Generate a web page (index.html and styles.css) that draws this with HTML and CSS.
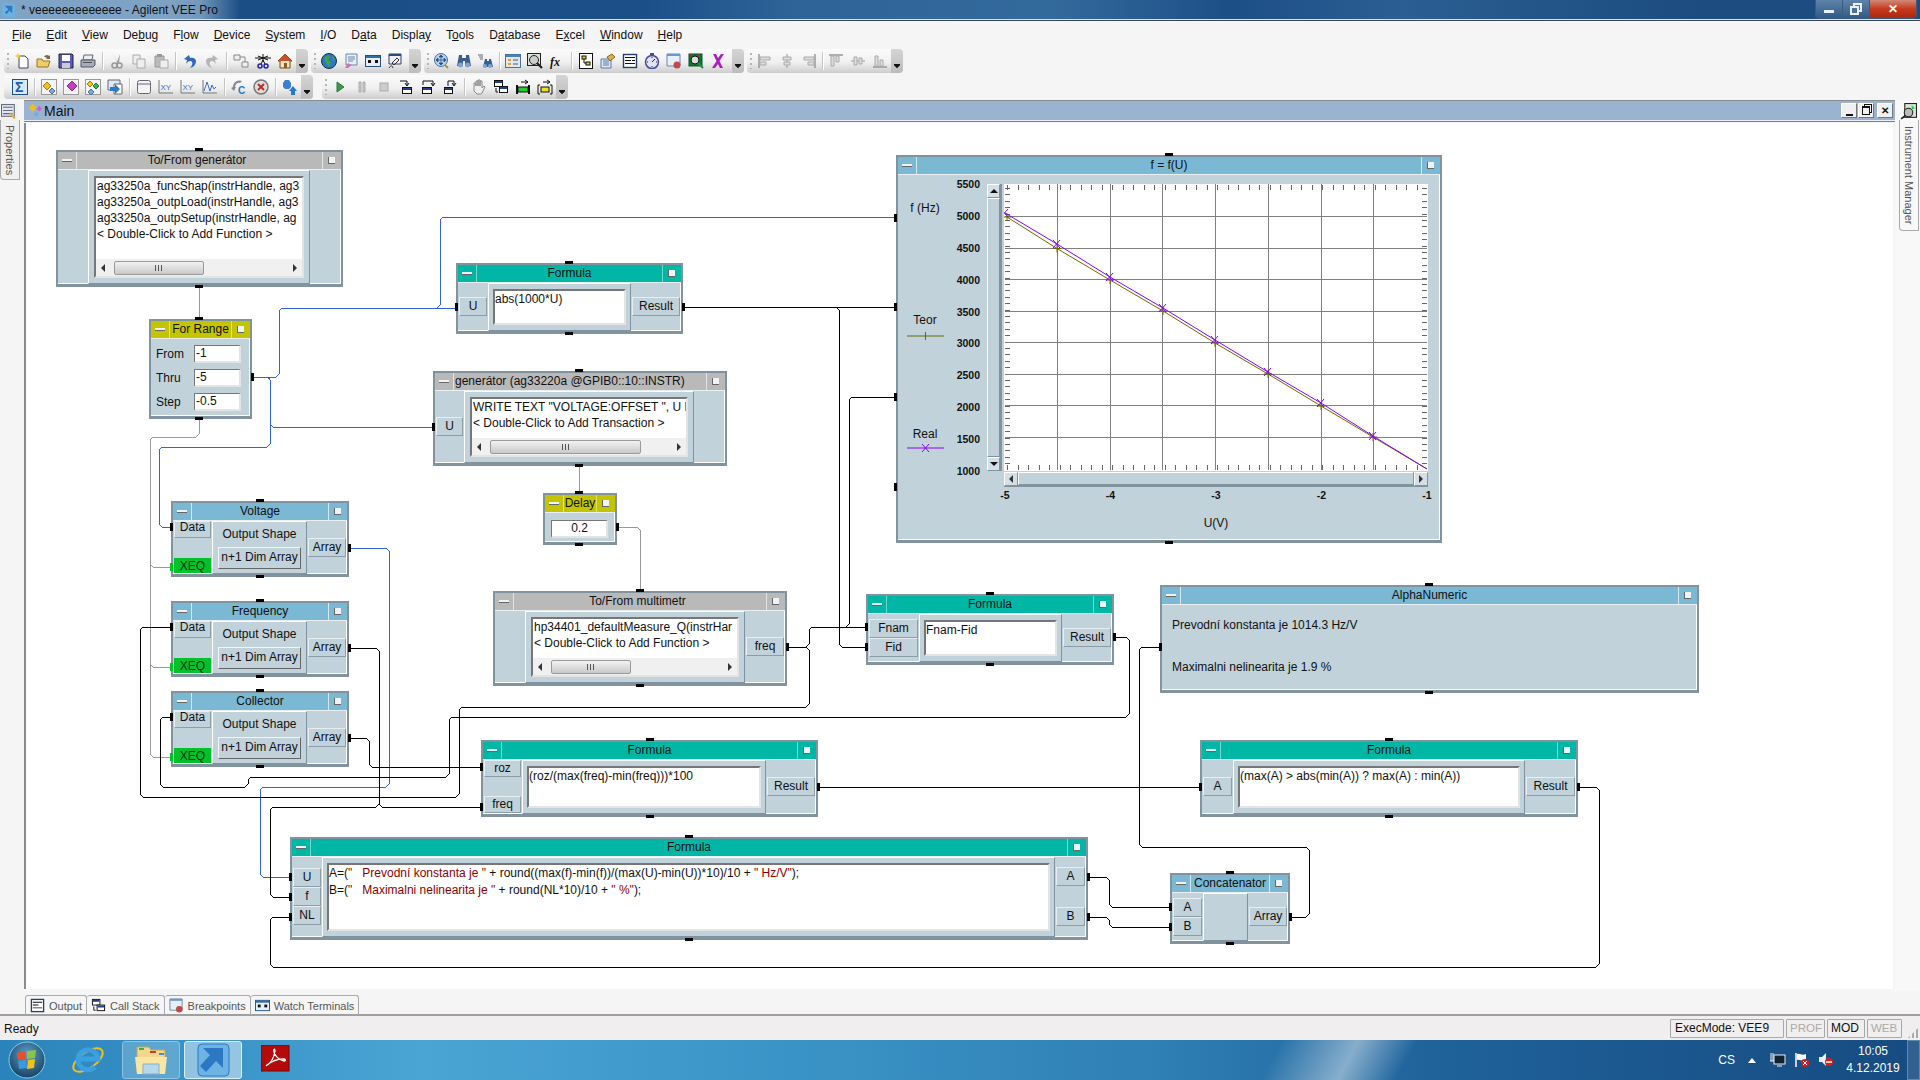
FILE: index.html
```html
<!DOCTYPE html>
<html>
<head>
    <title>veeeeeeeeeeeee - Agilent VEE Pro</title>
    <link rel="stylesheet" href="styles.css">
</head>
<body>
    <div class="titlebar">
        <svg class="app-icon" viewBox="0 0 16 16"><rect x="1" y="1" width="14" height="15" rx="2" fill="#6fb1de"/><path d="M4 4h8v8l-3-3-3 4-2-2 4-3z" fill="#2d78c4"/></svg>
        <span class="app-title">* veeeeeeeeeeeee - Agilent VEE Pro</span>
        <div class="win-btns">
            <span class="win-btn"><i class="w-min"></i></span>
            <span class="win-btn"><svg class="w-res" viewBox="0 0 12 12"><path d="M4 1h7v7H4z" fill="none" stroke="#e8eef4" stroke-width="2"/><path d="M1 4h7v7H1z" fill="#48719b" stroke="#e8eef4" stroke-width="2"/></svg></span>
            <span class="win-btn win-close">&#10005;</span>
        </div>
    </div>

    <div class="menubar">
        <span><u>F</u>ile</span><span><u>E</u>dit</span><span><u>V</u>iew</span><span>De<u>b</u>ug</span><span>F<u>l</u>ow</span><span><u>D</u>evice</span><span><u>S</u>ystem</span><span><u>I</u>/O</span><span>D<u>a</u>ta</span><span>Displa<u>y</u></span><span>T<u>o</u>ols</span><span>D<u>a</u>tabase</span><span>E<u>x</u>cel</span><span><u>W</u>indow</span><span><u>H</u>elp</span>
    </div>

    <div class="toolbars">
        <div class="tbrow">
            <div class="bar">
                <i class="grip"></i>
                <svg class="ic" viewBox="0 0 16 16"><path d="M5 3h6l3 3v9H5z" fill="#fff" stroke="#445"/><path d="M4 0l1 2 2 1-2 1-1 2-1-2-2-1 2-1z" fill="#fc3"/></svg>
                <svg class="ic" viewBox="0 0 16 16"><path d="M1 6h5l1 2h7l-2 6H1z" fill="#f0cc68" stroke="#9a7420"/><path d="M8 4c1-2 3-3 5-1l1-1v4h-4l1-1c-1-1-2-1-3-1z" fill="#7a6a40"/></svg>
                <svg class="ic" viewBox="0 0 16 16"><path d="M1 1h13l1 1v13H1z" fill="#5b5bb5" stroke="#223"/><rect x="4" y="2" width="8" height="6" fill="#fff"/><rect x="4" y="10" width="8" height="5" fill="#c9c9d8"/></svg>
                <svg class="ic" viewBox="0 0 16 16"><path d="M4 2h9l-1 5H3z" fill="#eee" stroke="#667"/><path d="M1 7h14v5l-2 2H1z" fill="#a7adb6" stroke="#556"/><rect x="3" y="9" width="9" height="1" fill="#555"/></svg>
                <i class="sep"></i>
                <svg class="ic" viewBox="0 0 16 16"><path d="M5 1l3 8 3-8-1 9-2 0z" fill="#9a9a9a"/><circle cx="5.5" cy="12.500" r="2.500" fill="none" stroke="#999" stroke-width="1.500"/><circle cx="10.500" cy="12.500" r="2.500" fill="none" stroke="#999" stroke-width="1.500"/></svg>
                <svg class="ic" viewBox="0 0 16 16"><path d="M2 2h7v9H2z" fill="#eee" stroke="#aaa"/><path d="M6 6h8v9H6z" fill="#eee" stroke="#aaa"/></svg>
                <svg class="ic" viewBox="0 0 16 16"><path d="M2 3h9v11H2z" fill="#bbb" stroke="#999"/><rect x="4" y="1" width="5" height="3" fill="#999"/><path d="M7 7h8v8H7z" fill="#eee" stroke="#aaa"/></svg>
                <i class="sep"></i>
                <svg class="ic" viewBox="0 0 16 16"><path d="M7 2L2 6l3 1-1 4c2-3 5-4 6-2 1 1 0 4-2 6 4-1 6-4 6-7 0-3-4-4-6-3z" fill="#2f6bb8"/></svg>
                <svg class="ic" viewBox="0 0 16 16"><path d="M9 2l5 4-3 1 1 4c-2-3-5-4-6-2-1 1 0 4 2 6-4-1-6-4-6-7 0-3 4-4 6-3z" fill="#b5b5b5"/></svg>
                <i class="sep"></i>
                <svg class="ic" viewBox="0 0 16 16"><path d="M1 2h6v5H1zM9 9h6v5H9z" fill="#eee" stroke="#888"/><path d="M7 4h5v5" fill="none" stroke="#888"/></svg>
                <svg class="ic" viewBox="0 0 16 16"><path d="M0 5h16M8 1v8M3 3l10 4M13 3L3 7" stroke="#111" fill="none"/><circle cx="5" cy="13" r="2" fill="none" stroke="#22a" stroke-width="1.500"/><circle cx="11" cy="13" r="2" fill="none" stroke="#22a" stroke-width="1.500"/><path d="M6 11l2-4 2 4" stroke="#111" fill="none"/></svg>
                <svg class="ic" viewBox="0 0 16 16"><path d="M8 1L1 8h2v7h10V8h2z" fill="#f3e3bc" stroke="#7a4a1a"/><path d="M8 1L1 8h14z" fill="#c8502a"/><rect x="7" y="10" width="3" height="5" fill="#8a5a20"/></svg>
                <i class="more"></i>
            </div>
            <div class="bar bar-wide">
                <i class="grip"></i>
                <svg class="ic" viewBox="0 0 16 16"><circle cx="8" cy="8" r="7.500" fill="#2b78c8" stroke="#134"/><path d="M3 5l4-3 2 2-2 3 3 2-2 5-3-4zM11 3l3 3-2 2z" fill="#3fa34a"/></svg>
                <svg class="ic" viewBox="0 0 16 16"><path d="M3 1h11v11H3z" fill="#e8eef6" stroke="#6a87b0"/><path d="M5 4h7M5 6h7M5 8h5" stroke="#6a87b0"/><path d="M2 15l3-5 4 2-4 3z" fill="#d070c0"/></svg>
                <svg class="ic" viewBox="0 0 16 16"><rect x="0.500" y="2.500" width="15" height="11" fill="#e8eef6" stroke="#24507f"/><rect x="1" y="3" width="14" height="2" fill="#2b6fb3"/><rect x="3" y="7" width="3" height="3" fill="#111"/><rect x="10" y="7" width="3" height="3" fill="#111"/></svg>
                <svg class="ic" viewBox="0 0 16 16"><path d="M2 1h12v10H2z" fill="#eef" stroke="#345"/><rect x="2" y="1" width="12" height="2" fill="#24507f"/><path d="M5 10l5-5 2 2-5 5zM2 15c2-3 3-3 4 0" fill="none" stroke="#333"/></svg>
                <i class="more"></i>
            </div>
            <div class="bar bar-wide">
                <i class="grip"></i>
                <svg class="ic" viewBox="0 0 16 16"><circle cx="7" cy="7" r="6.500" fill="#b8d0ec" stroke="#4a6fa0"/><path d="M7 2v10M2 7h10M7 2L5 4h4zM7 12l-2-2h4zM2 7l2-2v4zM12 7l-2-2v4z" fill="#24507f" stroke="#24507f" stroke-width=".7"/><path d="M11 12l3 3" stroke="#c08a30" stroke-width="2"/></svg>
                <svg class="ic" viewBox="0 0 16 16"><path d="M3 2h3v3h4V2h3l2 11H9V8H7v5H1z" fill="#3a5f8f"/><circle cx="4.500" cy="12" r="2.500" fill="#7fa4d2"/><circle cx="11.500" cy="12" r="2.500" fill="#7fa4d2"/></svg>
                <svg class="ic" viewBox="0 0 16 16"><path d="M7 6h2v2h2V6h2l2 8H5z" fill="#3a5f8f"/><circle cx="7" cy="13" r="2" fill="#7fa4d2"/><circle cx="12" cy="13" r="2" fill="#7fa4d2"/><path d="M0 2h5M1 4h4M2 6h3" stroke="#667"/></svg>
                <i class="sep sep-thin"></i>
                <svg class="ic" viewBox="0 0 16 16"><rect x="0.500" y="1.500" width="15" height="13" fill="#dfe8f5" stroke="#4a6fa0"/><rect x="1" y="2" width="14" height="2" fill="#4a7fc0"/><path d="M3 6h3v2H3zM3 10h3v2H3z" fill="#e0a030"/><path d="M8 7h5M8 11h5" stroke="#555"/></svg>
                <svg class="ic" viewBox="0 0 16 16"><rect x="0.500" y="0.500" width="13" height="12" fill="#d8e4d8" stroke="#222"/><circle cx="7" cy="7" r="4.500" fill="#ccc" stroke="#222"/><path d="M10 10l5 5" stroke="#222" stroke-width="2.200"/></svg>
                <svg class="ic" viewBox="0 0 16 16"><text x="1" y="13" class="ic-fx">fx</text></svg>
                <i class="sep"></i>
                <svg class="ic" viewBox="0 0 16 16"><rect x="1.500" y="0.500" width="13" height="15" fill="#fff" stroke="#111"/><rect x="4" y="3" width="4" height="3" fill="#e8cc20" stroke="#111"/><rect x="8" y="9" width="4" height="3" fill="#e8cc20" stroke="#111"/><path d="M6 6v4h2" fill="none" stroke="#111"/></svg>
                <svg class="ic" viewBox="0 0 16 16"><path d="M1 6h10v9H1z" fill="#dde6f2" stroke="#5a7aa5"/><path d="M3 8h6M3 10h6M3 12h6" stroke="#5a7aa5"/><path d="M7 4l5-3 3 3-5 4z" fill="#e0b040" stroke="#8a6a20"/></svg>
                <svg class="ic" viewBox="0 0 16 16"><rect x="1.500" y="1.500" width="13" height="13" fill="#fff" stroke="#24406a" stroke-width="1.400"/><path d="M3 4h10v1H3zM3 7h6v1H3zM3 10h10v1H3zM10 7h3v1h-3z" fill="#111"/></svg>
                <svg class="ic" viewBox="0 0 16 16"><circle cx="8" cy="9" r="6.500" fill="#dfe3f2" stroke="#4a4a9a" stroke-width="1.500"/><rect x="6" y="0" width="4" height="2" fill="#4a4a9a"/><path d="M8 9l3-3M8 4v1M8 13v1M3 9h1M12 9h1" stroke="#222"/></svg>
                <svg class="ic" viewBox="0 0 16 16"><path d="M1 1h13v12H1z" fill="#e8eef6" stroke="#6a87b0"/><rect x="1" y="1" width="13" height="2" fill="#6a97d0"/><circle cx="11" cy="12" r="3.500" fill="#c04a4a"/></svg>
                <svg class="ic" viewBox="0 0 16 16"><rect x="1" y="1" width="13" height="12" fill="#0a7a2a" stroke="#053"/><circle cx="7" cy="7" r="4" fill="#ddd" stroke="#111"/><path d="M10 10l5 5" stroke="#2a8a3a" stroke-width="2"/><path d="M3 1v3M11 1v3" stroke="#c22"/></svg>
                <svg class="ic" viewBox="0 0 16 16"><path d="M3 1h3l2 4 3-4h3L9.500 8l3.500 7h-3L8 11l-3 4H2l4.500-7z" fill="#b01ec0"/></svg>
                <i class="more"></i>
            </div>
            <div class="bar">
                <i class="grip"></i>
                <svg class="ic off" viewBox="0 0 16 16"><path d="M2 1v14" stroke="#999" stroke-width="1.500"/><path d="M3 4h10v3H3zM3 9h6v3H3z" fill="#ddd" stroke="#aaa"/></svg>
                <svg class="ic off" viewBox="0 0 16 16"><path d="M8 1v14" stroke="#999"/><path d="M4 4h8v3H4zM5 9h6v3H5z" fill="#ddd" stroke="#aaa"/></svg>
                <svg class="ic off" viewBox="0 0 16 16"><path d="M14 1v14" stroke="#999" stroke-width="1.500"/><path d="M3 4h10v3H3zM7 9h6v3H7z" fill="#ddd" stroke="#aaa"/></svg>
                <i class="sep sep-thin"></i>
                <svg class="ic off" viewBox="0 0 16 16"><path d="M1 2h14" stroke="#999" stroke-width="1.500"/><path d="M3 3h3v10H3zM8 3h3v6H8z" fill="#ddd" stroke="#aaa"/></svg>
                <svg class="ic off" viewBox="0 0 16 16"><path d="M1 8h14" stroke="#999"/><path d="M4 4h3v8H4zM9 5h3v6H9z" fill="#ddd" stroke="#aaa"/></svg>
                <svg class="ic off" viewBox="0 0 16 16"><path d="M1 14h14" stroke="#999" stroke-width="1.500"/><path d="M3 3h3v10H3zM8 7h3v6H8z" fill="#ddd" stroke="#aaa"/></svg>
                <i class="more"></i>
            </div>
        </div>
        <div class="tbrow">
            <div class="bar bar-nogrip">
                <svg class="ic" viewBox="0 0 16 16"><rect x="0.500" y="0.500" width="15" height="15" fill="#d8e8f8" stroke="#24507f"/><text x="3" y="13" class="ic-sig">&#931;</text></svg>
                <i class="sep"></i>
                <svg class="ic" viewBox="0 0 16 16"><rect x="0.500" y="0.500" width="15" height="15" fill="#f4f4f4" stroke="#999"/><path d="M6 3l4 4-4 4-4-4z" fill="#f0c020" stroke="#a08010"/><path d="M11 9l3 3-3 3-3-3z" fill="#7fa8e0" stroke="#4a6fa0"/></svg>
                <svg class="ic" viewBox="0 0 16 16"><rect x="0.500" y="0.500" width="15" height="15" fill="#f4f4f4" stroke="#999"/><path d="M9 2l5 5-5 5-5-5z" fill="#c040c0" stroke="#803080"/></svg>
                <svg class="ic" viewBox="0 0 16 16"><rect x="0.500" y="0.500" width="15" height="15" fill="#f4f4f4" stroke="#999"/><path d="M5 2l3 3-3 3-3-3z" fill="#f0c020" stroke="#a08010"/><path d="M11 4l3 3-3 3-3-3z" fill="#40b060" stroke="#207040"/><path d="M6 10l3 3-3 3-3-3z" fill="#7fa8e0" stroke="#4a6fa0"/></svg>
                <svg class="ic" viewBox="0 0 16 16"><path d="M1 1h12v10H1z" fill="#dfe8f5" stroke="#667"/><path d="M7 5h8v10H7z" fill="#fff" stroke="#667"/><path d="M3 8h5V5l5 5-5 5v-3H3z" fill="#2a78c8"/></svg>
                <i class="sep"></i>
                <svg class="ic" viewBox="0 0 16 16"><rect x="1.500" y="1.500" width="13" height="13" rx="2" fill="#f4f4f4" stroke="#667"/><path d="M2 5h12" stroke="#667"/></svg>
                <svg class="ic" viewBox="0 0 16 16"><path d="M1 1v13h14" fill="none" stroke="#777"/><text x="2.500" y="11" class="ic-xy">XY</text></svg>
                <svg class="ic" viewBox="0 0 16 16"><path d="M1 1v13h14" fill="none" stroke="#777"/><text x="2.500" y="11" class="ic-xy">XY</text></svg>
                <svg class="ic" viewBox="0 0 16 16"><path d="M1 1v13h14" fill="none" stroke="#777"/><path d="M2 12l3-9 3 9 2-6 2 4 2-2" fill="none" stroke="#3a6fc0"/></svg>
                <i class="sep"></i>
                <svg class="ic" viewBox="0 0 16 16"><path d="M11 2c-5-2-9 2-9 6l-2 1 3 3 2-4-1 0c0-3 3-5 5-4z" fill="#888"/><text x="7" y="15" class="ic-c">C</text></svg>
                <svg class="ic" viewBox="0 0 16 16"><circle cx="8" cy="8" r="7" fill="#ddd" stroke="#777" stroke-width="1.500"/><path d="M5 5l6 6M11 5l-6 6" stroke="#c02a2a" stroke-width="2"/></svg>
                <i class="sep"></i>
                <svg class="ic" viewBox="0 0 16 16"><path d="M3 1h4l2 3v4l-2 2H3L1 8V4z" fill="#3a7fd0"/><path d="M11 7l4 5h-2v4h-4v-4H7z" fill="#2a78c8"/></svg>
                <i class="more"></i>
            </div>
            <div class="bar bar-gap">
                <i class="grip"></i>
                <svg class="ic" viewBox="0 0 16 16"><path d="M5 3l7 5-7 5z" fill="#3a9a4a" stroke="#2a7a3a"/></svg>
                <svg class="ic" viewBox="0 0 16 16"><path d="M5 3h2v10H5zM9 3h2v10H9z" fill="#ccc" stroke="#aaa"/></svg>
                <svg class="ic" viewBox="0 0 16 16"><rect x="4" y="4" width="8" height="8" fill="#ccc" stroke="#aaa"/></svg>
                <svg class="ic" viewBox="0 0 16 16"><rect x="4.500" y="8.500" width="9" height="6" fill="#fff" stroke="#111"/><rect x="5" y="9" width="8" height="2" fill="#24408a"/><path d="M2 2h7v4M7 4l2 3 2-3" fill="none" stroke="#111"/></svg>
                <svg class="ic" viewBox="0 0 16 16"><rect x="2.500" y="8.500" width="9" height="6" fill="#fff" stroke="#111"/><rect x="3" y="9" width="8" height="2" fill="#24408a"/><path d="M3 6V2h10v4M11 4l2 3 2-3" fill="none" stroke="#111"/></svg>
                <svg class="ic" viewBox="0 0 16 16"><rect x="2.500" y="8.500" width="8" height="6" fill="#fff" stroke="#111"/><rect x="3" y="9" width="7" height="2" fill="#24408a"/><path d="M6 7V2h6v4M10 4l2 3 2-3" fill="none" stroke="#111"/></svg>
                <i class="sep"></i>
                <svg class="ic" viewBox="0 0 16 16"><path d="M3 8V4h2v3V2h2v5V1h2v6V2h2v7l2-2 1 1-3 6-1 1H6L3 12z" fill="#eee" stroke="#888"/></svg>
                <svg class="ic" viewBox="0 0 16 16"><rect x="1.500" y="1.500" width="8" height="6" fill="#fff" stroke="#111"/><rect x="6.500" y="7.500" width="8" height="6" fill="#fff" stroke="#111"/><path d="M2 2h7v2H2zM7 8h7v2H7z" fill="#24408a"/><path d="M3 9v4h2" fill="none" stroke="#111"/></svg>
                <svg class="ic" viewBox="0 0 16 16"><path d="M2 6v9M14 6v9" stroke="#111" stroke-width="2"/><rect x="3" y="8" width="10" height="5" fill="#20d030" stroke="#111"/><path d="M6 3h7M10 1l3 2-3 2" fill="none" stroke="#111"/></svg>
                <svg class="ic" viewBox="0 0 16 16"><path d="M3 6H1v9h2M13 6h2v9h-2" fill="none" stroke="#111"/><rect x="4" y="8" width="8" height="5" fill="#f0e020" stroke="#111"/><path d="M6 3h7M10 1l3 2-3 2" fill="none" stroke="#111"/></svg>
                <i class="more"></i>
            </div>
        </div>
    </div>

    <div class="workspace">
        <div class="rail rail-left">
            <svg class="rail-ic" viewBox="0 0 16 16"><rect x="0.500" y="1.500" width="12" height="11" fill="#dfe8f5" stroke="#667"/><path d="M2 4h9M2 7h9M2 10h9" stroke="#667"/><path d="M9 9l5 5-2 1-4-5z" fill="#e0b040"/></svg>
            <span class="rail-text">Properties</span>
        </div>
        <div class="doc">
            <div class="doc-bar">
                <svg class="doc-ic" viewBox="0 0 16 16"><path d="M5 1l4 4-4 4-4-4z" fill="#f0c020"/><path d="M12 3l3 3-3 3-3-3z" fill="#d060d0"/><path d="M9 9l3 3-3 3-3-3z" fill="#7fa8e0"/></svg>
                <span class="doc-title">Main</span>
                <div class="doc-btns">
                    <span class="doc-btn"><i class="d-min"></i></span>
                    <span class="doc-btn"><i class="d-res"></i></span>
                    <span class="doc-btn doc-close">&#10005;</span>
                </div>
            </div>
            <div class="canvas">

                <div class="node gray n-togen">
                    <div class="ttl"><i class="tb-min"></i><span>To/From generátor</span><i class="tb-max"></i></div>
                    <div class="bd">
                        <div class="col w-29"></div>
                        <div class="panel">
                            <div class="inset">
                                <div class="lines">ag33250a_funcShap(instrHandle, ag3<br>ag33250a_outpLoad(instrHandle, ag3<br>ag33250a_outpSetup(instrHandle, ag<br>&lt; Double-Click to Add Function &gt;</div>
                                <div class="hs"><i class="arr arr-l"></i><i class="thumb th-togen"></i><i class="arr arr-r"></i></div>
                            </div>
                        </div>
                        <div class="col w-30"></div>
                    </div>
                </div>

                <div class="node yellow n-range">
                    <div class="ttl"><i class="tb-min"></i><span>For Range</span><i class="tb-max"></i></div>
                    <div class="bd range-bd">
                        <div class="range-row"><span>From</span><span class="field">-1</span></div>
                        <div class="range-row"><span>Thru</span><span class="field">-5</span></div>
                        <div class="range-row"><span>Step</span><span class="field">-0.5</span></div>
                    </div>
                </div>

                <div class="node teal n-abs">
                    <div class="ttl"><i class="tb-min"></i><span>Formula</span><i class="tb-max"></i></div>
                    <div class="bd">
                        <div class="col w-29"><span class="pin">U</span></div>
                        <div class="panel"><div class="inset code">abs(1000*U)</div></div>
                        <div class="col w-49"><span class="pin">Result</span></div>
                    </div>
                </div>

                <div class="node gray n-gen">
                    <div class="ttl"><i class="tb-min"></i><span class="ttl-left">generátor (ag33220a @GPIB0::10::INSTR)</span><i class="tb-max"></i></div>
                    <div class="bd">
                        <div class="col w-28"><span class="pin">U</span></div>
                        <div class="panel">
                            <div class="inset">
                                <div class="lines">WRITE TEXT "VOLTAGE:OFFSET ", U E<br>&lt; Double-Click to Add Transaction &gt;</div>
                                <div class="hs"><i class="arr arr-l"></i><i class="thumb th-gen"></i><i class="arr arr-r"></i></div>
                            </div>
                        </div>
                        <div class="col w-30"></div>
                    </div>
                </div>

                <div class="node yellow n-delay">
                    <div class="ttl"><i class="tb-min"></i><span>Delay</span><i class="tb-max"></i></div>
                    <div class="bd delay-bd"><span class="field field-c">0.2</span></div>
                </div>

                <div class="node gray n-multi">
                    <div class="ttl"><i class="tb-min"></i><span>To/From multimetr</span><i class="tb-max"></i></div>
                    <div class="bd">
                        <div class="col w-29"></div>
                        <div class="panel">
                            <div class="inset">
                                <div class="lines">hp34401_defaultMeasure_Q(instrHar<br>&lt; Double-Click to Add Function &gt;</div>
                                <div class="hs"><i class="arr arr-l"></i><i class="thumb th-multi"></i><i class="arr arr-r"></i></div>
                            </div>
                        </div>
                        <div class="col w-40"><span class="pin">freq</span></div>
                    </div>
                </div>

                <div class="node blue n-volt">
                    <div class="ttl"><i class="tb-min"></i><span>Voltage</span><i class="tb-max"></i></div>
                    <div class="bd">
                        <div class="col col-ends w-38"><span class="pin pin-data">Data</span><span class="xeq">XEQ</span></div>
                        <div class="panel shape"><span>Output Shape</span><span class="btn">n+1 Dim Array</span></div>
                        <div class="col w-40"><span class="pin">Array</span></div>
                    </div>
                </div>

                <div class="node blue n-freq">
                    <div class="ttl"><i class="tb-min"></i><span>Frequency</span><i class="tb-max"></i></div>
                    <div class="bd">
                        <div class="col col-ends w-38"><span class="pin pin-data">Data</span><span class="xeq">XEQ</span></div>
                        <div class="panel shape"><span>Output Shape</span><span class="btn">n+1 Dim Array</span></div>
                        <div class="col w-40"><span class="pin">Array</span></div>
                    </div>
                </div>

                <div class="node blue n-coll">
                    <div class="ttl"><i class="tb-min"></i><span>Collector</span><i class="tb-max"></i></div>
                    <div class="bd">
                        <div class="col col-ends w-38"><span class="pin pin-data">Data</span><span class="xeq">XEQ</span></div>
                        <div class="panel shape"><span>Output Shape</span><span class="btn">n+1 Dim Array</span></div>
                        <div class="col w-40"><span class="pin">Array</span></div>
                    </div>
                </div>

                <div class="node blue n-chart">
                    <div class="ttl"><i class="tb-min"></i><span>f = f(U)</span><i class="tb-max"></i></div>
                    <div class="bd chart-bd">
                        <div class="legend">
                            <span class="leg-axis">f (Hz)</span>
                            <span class="leg-name leg-teor">Teor</span>
                            <svg class="leg-line" viewBox="0 0 37 10"><path d="M0 5H37M18.500 1V9" stroke="#6b6b00" fill="none"/></svg>
                            <span class="leg-name leg-real">Real</span>
                            <svg class="leg-line" viewBox="0 0 37 10"><path d="M0 5H37M15 1L22 9M22 1L15 9" stroke="#8a00ff" fill="none"/></svg>
                        </div>
                        <div class="ylabels"><b>5500</b><b>5000</b><b>4500</b><b>4000</b><b>3500</b><b>3000</b><b>2500</b><b>2000</b><b>1500</b><b>1000</b></div>
                        <div class="vscroll"><i class="sb-btn"><i class="arr arr-u"></i></i><i class="sb-track"></i><i class="sb-btn"><i class="arr arr-d"></i></i></div>
                        <div class="plot-col">
                            <svg class="plot" viewBox="1003 183 424 287">
                                <rect x="1003" y="183" width="424" height="287" fill="#fff"/>
                                <path class="ticks-x" d="M1006 186.500H1425M1006 466.500H1425"/>
                                <path class="ticks-y" d="M1006.500 187V466M1423.500 187V466"/>
                                <path class="grid" d="M1056.500 183V469M1109.500 183V469M1161.500 183V469M1214.500 183V469M1267.500 183V469M1320.500 183V469M1372.500 183V469M1004 215.500H1426M1004 247.500H1426M1004 278.500H1426M1004 310.500H1426M1004 341.500H1426M1004 373.500H1426M1004 404.500H1426M1004 436.500H1426"/>
                                <path class="trace-teor" d="M1006 216L1056 247.500 1109 279 1162 310 1214 342 1267 373 1320 405 1372 436 1426 468"/>
                                <path class="mark-teor" d="M1006 212v8M1056 243.500v8M1109 275v8M1162 306v8M1214 338v8M1267 369v8M1320 401v8M1372 432v8M1002 216h8M1052 247.500h8M1105 279h8M1158 310h8M1210 342h8M1263 373h8M1316 405h8M1368 436h8"/>
                                <path class="trace-real" d="M1004 212L1056 243 1109 276 1162 307 1214 339 1267 371 1320 402 1372 435 1426 468"/>
                                <path class="mark-real" d="M1000 208l7 8M1007 208l-7 8M1052 239l7 8M1059 239l-7 8M1105 272l7 8M1112 272l-7 8M1158 303l7 8M1165 303l-7 8M1210 335l7 8M1217 335l-7 8M1263 367l7 8M1270 367l-7 8M1316 398l7 8M1323 398l-7 8M1368 431l7 8M1375 431l-7 8"/>
                            </svg>
                            <div class="hscroll"><i class="sb-btn"><i class="arr arr-l"></i></i><i class="sb-track"></i><i class="sb-btn"><i class="arr arr-r"></i></i></div>
                            <div class="xlabels"><b>-5</b><b>-4</b><b>-3</b><b>-2</b><b>-1</b></div>
                            <div class="xname">U(V)</div>
                        </div>
                    </div>
                </div>

                <div class="node teal n-fnam">
                    <div class="ttl"><i class="tb-min"></i><span>Formula</span><i class="tb-max"></i></div>
                    <div class="bd">
                        <div class="col w-50"><span class="pin">Fnam</span><span class="pin">Fid</span></div>
                        <div class="panel"><div class="inset code">Fnam-Fid</div></div>
                        <div class="col w-49"><span class="pin">Result</span></div>
                    </div>
                </div>

                <div class="node blue n-alpha">
                    <div class="ttl"><i class="tb-min"></i><span>AlphaNumeric</span><i class="tb-max"></i></div>
                    <div class="bd alpha-bd">
                        <span>Prevodní konstanta je 1014.3 Hz/V</span>
                        <span>Maximalni nelinearita je 1.9 %</span>
                    </div>
                </div>

                <div class="node teal n-roz">
                    <div class="ttl"><i class="tb-min"></i><span>Formula</span><i class="tb-max"></i></div>
                    <div class="bd">
                        <div class="col col-ends w-39"><span class="pin pin-s">roz</span><span class="pin pin-s">freq</span></div>
                        <div class="panel"><div class="inset code">(roz/(max(freq)-min(freq)))*100</div></div>
                        <div class="col w-49"><span class="pin">Result</span></div>
                    </div>
                </div>

                <div class="node teal n-max">
                    <div class="ttl"><i class="tb-min"></i><span>Formula</span><i class="tb-max"></i></div>
                    <div class="bd">
                        <div class="col w-30"><span class="pin">A</span></div>
                        <div class="panel"><div class="inset code">(max(A) &gt; abs(min(A)) ? max(A) : min(A))</div></div>
                        <div class="col w-50"><span class="pin">Result</span></div>
                    </div>
                </div>

                <div class="node teal n-big">
                    <div class="ttl"><i class="tb-min"></i><span>Formula</span><i class="tb-max"></i></div>
                    <div class="bd">
                        <div class="col w-29"><span class="pin">U</span><span class="pin">f</span><span class="pin">NL</span></div>
                        <div class="panel"><div class="inset code code-big">A=(<em>"   Prevodní konstanta je "</em> + round((max(f)-min(f))/(max(U)-min(U))*10)/10 + <em>" Hz/V"</em>);<br>B=(<em>"   Maximalni nelinearita je "</em> + round(NL*10)/10 + <em>" %"</em>);</div></div>
                        <div class="col col-ab w-30"><span class="pin">A</span><span class="pin">B</span></div>
                    </div>
                </div>

                <div class="node blue n-conc">
                    <div class="ttl"><i class="tb-min"></i><span>Concatenator</span><i class="tb-max"></i></div>
                    <div class="bd">
                        <div class="col w-30"><span class="pin">A</span><span class="pin">B</span></div>
                        <div class="panel"></div>
                        <div class="col w-40"><span class="pin">Array</span></div>
                    </div>
                </div>

                <svg class="wires" viewBox="26 123 1867 866">
                    <path class="w-seq" d="M199 287V319M199 419V434L196 437H153L150 440V754L153 757H171M150 564L153 567H171M150 664L153 667H171M579 466V493M617 527H637L640 530V591"/>
                    <path class="w-data" d="M252 377H276L279 374V311L282 308H456M437 308L440 305V220L443 217H896M268 377L270 380V444L267 447H162L159 450V524L162 527H171M270 424L273 427H433M349 548H386L389 551V784L386 787H263L260 790V874L263 877H290"/>
                    <path class="w-black" d="M349 648H376L379 651V804L382 807H481M379 804L376 807H273L270 810V894L273 897H290M349 738H366L369 741V764L372 767H481M171 717H163L160 720V784L163 787H245L248 784V780L251 777H446L449 774V720L452 717H1126L1129 714V640L1126 637H1114M171 627H143L140 630V794L143 797H456L459 794V710L462 707H806L809 704V650L806 647H787M806 647L809 644V630L812 627H866M683 307H896M836 307L839 310V644L842 647H866M846 627L849 624V400L852 397H896M818 787H1200M1578 787H1596L1599 790V964L1596 967H273L270 964V920L273 917H290M1088 877H1106L1109 880V904L1112 907H1170M1088 917H1106L1109 920V924L1112 927H1170M1290 917H1306L1309 914V850L1306 847H1142L1139 844V650L1142 647H1160"/>
                    <path class="w-pins" d="M195 148h8v3h-8zM195 285h8v3h-8zM195 317h8v3h-8zM195 417h8v3h-8zM565 261h8v3h-8zM565 332h8v3h-8zM575 369h8v3h-8zM575 464h8v3h-8zM575 491h8v3h-8zM575 543h8v3h-8zM636 589h8v3h-8zM636 684h8v3h-8zM256 499h8v3h-8zM256 575h8v3h-8zM256 599h8v3h-8zM256 675h8v3h-8zM256 689h8v3h-8zM256 765h8v3h-8zM1165 153h8v3h-8zM1165 541h8v3h-8zM986 592h8v3h-8zM986 663h8v3h-8zM1425 583h8v3h-8zM1425 691h8v3h-8zM646 738h8v3h-8zM646 815h8v3h-8zM1385 738h8v3h-8zM1385 815h8v3h-8zM685 835h8v3h-8zM685 938h8v3h-8zM1226 871h8v3h-8zM1226 942h8v3h-8zM894 214h3v8h-3zM894 303h3v8h-3zM894 393h3v8h-3zM894 483h3v8h-3zM251 373h3v8h-3zM455 303h3v8h-3zM682 303h3v8h-3zM432 423h3v8h-3zM616 523h3v8h-3zM786 643h3v8h-3zM865 623h3v8h-3zM865 643h3v8h-3zM1113 633h3v8h-3zM1159 643h3v8h-3zM170 523h3v8h-3zM348 544h3v8h-3zM170 623h3v8h-3zM348 644h3v8h-3zM170 713h3v8h-3zM348 734h3v8h-3zM480 763h3v8h-3zM480 803h3v8h-3zM817 783h3v8h-3zM1199 783h3v8h-3zM1577 783h3v8h-3zM289 873h3v8h-3zM289 893h3v8h-3zM289 913h3v8h-3zM1087 873h3v8h-3zM1087 913h3v8h-3zM1169 903h3v8h-3zM1169 923h3v8h-3zM1289 913h3v8h-3z"/>
                    <path class="w-xeq" d="M170 563h3v8h-3zM170 663h3v8h-3zM170 753h3v8h-3z"/>
                </svg>
            </div>
        </div>
        <div class="rail rail-right">
            <svg class="rail-ic" viewBox="0 0 16 16"><rect x="4.500" y="0.500" width="11" height="13" fill="#d8e4d8" stroke="#222"/><circle cx="8" cy="9" r="4" fill="#bbb" stroke="#222"/><path d="M5 12l-4 3" stroke="#222" stroke-width="1.500"/><path d="M11 2l3 3-3 1z" fill="#20d040"/></svg>
            <span class="rail-text">Instrument Manager</span>
        </div>
    </div>

    <div class="tabs">
        <span class="tab"><svg class="tab-ic" viewBox="0 0 16 16"><rect x="1.500" y="1.500" width="13" height="13" fill="#fff" stroke="#24406a" stroke-width="1.400"/><path d="M3 4h10v1H3zM3 7h6v1H3zM3 10h10v1H3z" fill="#111"/></svg>Output</span>
        <span class="tab"><svg class="tab-ic" viewBox="0 0 16 16"><rect x="1.500" y="1.500" width="8" height="6" fill="#fff" stroke="#111"/><rect x="6.500" y="7.500" width="8" height="6" fill="#fff" stroke="#111"/><path d="M2 2h7v2H2zM7 8h7v2H7z" fill="#24408a"/><path d="M3 9v4h2" fill="none" stroke="#111"/></svg>Call Stack</span>
        <span class="tab"><svg class="tab-ic" viewBox="0 0 16 16"><path d="M1 1h13v12H1z" fill="#e8eef6" stroke="#6a87b0"/><rect x="1" y="1" width="13" height="2" fill="#6a97d0"/><circle cx="11" cy="12" r="3.500" fill="#c04a4a"/></svg>Breakpoints</span>
        <span class="tab"><svg class="tab-ic" viewBox="0 0 16 16"><rect x="0.500" y="2.500" width="15" height="11" fill="#e8eef6" stroke="#24507f"/><rect x="1" y="3" width="14" height="2" fill="#2b6fb3"/><rect x="3" y="7" width="3" height="3" fill="#111"/><rect x="10" y="7" width="3" height="3" fill="#111"/></svg>Watch Terminals</span>
    </div>

    <div class="statusbar">
        <span class="status-ready">Ready</span>
        <span class="pane pane-mode">ExecMode: VEE9</span>
        <span class="pane pane-prof pane-off">PROF</span>
        <span class="pane pane-mod">MOD</span>
        <span class="pane pane-web pane-off">WEB</span>
        <i class="sizegrip"></i>
    </div>

    <div class="taskbar">
        <svg class="orb" viewBox="0 0 40 40">
            <defs><radialGradient id="orbg" cx=".5" cy=".35" r=".7"><stop offset="0" stop-color="#5fa0c8"/><stop offset="1" stop-color="#123a5c"/></radialGradient></defs>
            <circle cx="20" cy="20" r="18" fill="url(#orbg)" stroke="#7ed0e8"/>
            <path d="M10 13l8-2 1 8-8 1z" fill="#e8502a"/><path d="M20 11l9-1-1 8-8 1z" fill="#8ac63f"/><path d="M11 21l8-1 1 8-8 1z" fill="#3a9ae0"/><path d="M21 20l7-1-1 9-7 1z" fill="#f2c21a"/>
        </svg>
        <svg class="tk-ic tk-ie" viewBox="0 0 36 36"><ellipse cx="18" cy="18" rx="17" ry="8" transform="rotate(-35 18 18)" fill="none" stroke="#f0c020" stroke-width="2"/><path d="M8 17h20a10 10 0 1 0-3 8" fill="none" stroke="#3aa0e0" stroke-width="5"/></svg>
        <span class="tk-btn tk-btn-first"><svg class="tk-ic" viewBox="0 0 36 36"><path d="M4 5h12l2 3h14v22H4z" fill="#f4d78a" stroke="#c8a650"/><path d="M6 6h5v2H6z" fill="#3ab04a"/><path d="M17 9h6v2h-6z" fill="#c83a2a"/><path d="M26 11h5v2h-5z" fill="#3a90e0"/><path d="M2 15h32l-2 17H4z" fill="#f8e6a6"/><path d="M10 22h16v10H10z" fill="#b4d8ec" stroke="#8ab0c8"/></svg></span>
        <span class="tk-btn tk-btn-active"><svg class="tk-ic" viewBox="0 0 36 36"><rect x="3" y="2" width="31" height="32" rx="4" fill="#6db4e4" stroke="#2d78c4"/><path d="M8 6h20v20l-7-7-10 11-6-6 10-11z" fill="#2d78c4"/></svg></span>
        <svg class="tk-ic tk-pdf" viewBox="0 0 30 28"><rect width="28" height="26" fill="#b40a0a" stroke="#7a0505"/><path d="M5 21c5-3 8-8 9-15 0-3-2-2-1 1 1 4 5 8 10 9 2 0 2-2-1-2-5 0-11 2-16 6z" fill="none" stroke="#fff" stroke-width="1.300"/></svg>
        <div class="tray">
            <span class="tray-cs">CS</span>
            <span class="tray-up"></span>
            <svg class="tray-ic" viewBox="0 0 16 16"><rect x="4" y="3" width="11" height="9" fill="#123" stroke="#eee"/><path d="M1 1v8M3 1v8M0 9h4M7 14h5" stroke="#eee"/></svg>
            <svg class="tray-ic" viewBox="0 0 16 16"><path d="M2 1v14" stroke="#fff" stroke-width="1.500"/><path d="M3 2c3-1 5 2 9 0v6c-4 2-6-1-9 0z" fill="#fff"/><circle cx="11" cy="11" r="4" fill="#d02020"/><path d="M9 9l4 4M13 9l-4 4" stroke="#fff"/></svg>
            <svg class="tray-ic" viewBox="0 0 16 16"><path d="M1 5h3l4-4v13L4 10H1z" fill="#eee"/><circle cx="11" cy="10" r="4" fill="#d02020"/><path d="M8 10h6" stroke="#fff" stroke-width="1.500"/></svg>
            <div class="clock"><span>10:05</span><span>4.12.2019</span></div>
            <i class="show-desktop"></i>
        </div>
    </div>
</body>
</html>
```

FILE: styles.css
```css
body {
    margin: 0;
    width: 1920px;
    height: 1080px;
    overflow: hidden;
    display: flex;
    flex-direction: column;
    background: #f5f5f5;
    font-family: "Liberation Sans", Arial, sans-serif;
    font-size: 12px;
    color: #111;
}

i { display: block; }

/* Window title */
.titlebar {
    flex: none;
    height: 19px;
    display: flex;
    align-items: center;
    background: linear-gradient(90deg, #7ea4c6 0, #7ea2c4 170px, #7398bb 200px, #1c4e86 240px, #1c4f88 640px, #2e6498 800px, #336a9c 1050px, #1d4f87 1230px, #2b5e92 1400px, #1c4c80 1700px, #1c4c80 100%);
    border-bottom: 1px solid #d5e0ea;
    box-shadow: 0 1px 0 #3c4650;
    position: relative;
    color: #111;
}

.app-icon { width: 15px; height: 17px; margin-left: 1px; }
.app-title { margin-left: 5px; font-size: 12px; }

.win-btns {
    position: absolute;
    right: 3px;
    top: 0;
    height: 18px;
    display: flex;
    border: 1px solid #3b5c7f;
    border-top: 0;
    border-radius: 0 0 4px 4px;
    overflow: hidden;
}

.win-btn {
    width: 26px;
    border-right: 1px solid #3b5c7f;
    background: linear-gradient(#5f83a8, #2f5a88);
    display: flex;
    align-items: center;
    justify-content: center;
    color: #fff;
}

.win-close {
    width: 46px;
    border-right: 0;
    background: linear-gradient(#d08a78, #c8391d 50%, #a9280f);
    font-size: 12px;
    font-weight: bold;
}

.w-min { width: 10px; height: 3px; margin-top: 4px; background: #e8eef4; }
.w-res { width: 12px; height: 12px; }

/* Menu */
.menubar {
    flex: none;
    height: 26px;
    box-sizing: border-box;
    margin-top: 2px;
    display: flex;
    align-items: center;
    padding-left: 5px;
    font-size: 12px;
    background: #f5f5f5;
}

.menubar span { padding: 0 7px; margin-right: 1px; }

/* Toolbars */
.toolbars {
    flex: none;
    height: 51px;
    margin-top: 1px;
    padding-left: 4px;
    background: #f5f5f5;
}

.tbrow {
    display: flex;
    height: 24px;
    gap: 3px;
    margin-bottom: 2px;
}

.bar {
    position: relative;
    height: 24px;
    display: flex;
    align-items: center;
    padding-right: 12px;
    border-radius: 4px;
    background: linear-gradient(#fbfbfb 0, #f0f0f0 55%, #cdcdcd 100%);
}

.bar-wide { padding-right: 15px; }
.bar-nogrip { padding-left: 5px; }
.bar-gap { margin-left: 6px; }

.grip {
    width: 2px;
    height: 16px;
    margin: 0 2px 0 3px;
    background: repeating-linear-gradient(#b5b5b5 0 2px, transparent 2px 5px);
}

.ic {
    width: 22px;
    height: 16px;
    flex: none;
}

.sep {
    width: 1px;
    height: 18px;
    margin: 0 3px;
    background: #c4c4c4;
    box-shadow: 1px 0 0 #fff;
}

.sep-thin { margin: 0 2px; }

.more {
    position: absolute;
    right: 0;
    top: 0;
    width: 12px;
    height: 24px;
    border-radius: 0 4px 4px 0;
    background: linear-gradient(#d4d4d4, #bcbcbc);
}

.more::after {
    content: "";
    position: absolute;
    left: 3px;
    top: 15px;
    width: 6px;
    height: 1px;
    background: #111;
    border-bottom: 3px solid #111;
    clip-path: polygon(0 0, 100% 0, 100% 25%, 50% 100%, 0 25%);
}

.ic-fx { font: italic bold 12px "Liberation Serif", serif; fill: #111; }
.ic-sig { font: bold 14px "Liberation Sans", sans-serif; fill: #1560b0; }
.ic-xy { font: 8px "Liberation Sans", sans-serif; fill: #3a6fc0; }
.ic-c { font: bold 10px "Liberation Sans", sans-serif; fill: #2a78c8; }

/* Work area */
.workspace {
    flex: none;
    height: 891px;
    display: flex;
}

.rail {
    flex: none;
    background: #f5f5f5;
    box-sizing: border-box;
}

.rail-left { width: 24px; padding: 3px 5px 0 0; }
.rail-right { width: 25px; padding: 3px 0 0 4px; background: #f8f8f8; }

.rail-ic { display: block; width: 17px; height: 17px; margin-left: 1px; }

.rail-left .rail-ic,
.rail-left .rail-text {
    background: #f0f0f0;
}

.rail-text {
    writing-mode: vertical-rl;
    display: block;
    color: #555;
    font-size: 11px;
    padding: 5px 0 4px;
    line-height: 18px;
    border: 1px solid #aaa;
    border-top: 0;
    border-radius: 0 0 0 4px;
}

.rail-right .rail-text { padding-top: 6px; padding-bottom: 6px; }

.doc {
    flex: 1;
    display: flex;
    flex-direction: column;
    min-width: 0;
}

.doc-bar {
    flex: none;
    height: 19px;
    display: flex;
    align-items: center;
    background: #99b3d0;
    border-top: 1px solid #8a8a8a;
    border-bottom: 1px solid #e8eef4;
    box-shadow: 0 1px 0 #808080;
    padding-left: 4px;
}

.doc-ic { width: 15px; height: 15px; }
.doc-title { font-size: 14px; margin-left: 1px; }

.doc-btns {
    margin-left: auto;
    margin-right: 2px;
    display: flex;
    gap: 1px;
}

.doc-btn {
    width: 14px;
    height: 13px;
    background: #f0f0f0;
    border: 1px solid;
    border-color: #fff #777 #777 #fff;
    display: flex;
    align-items: center;
    justify-content: center;
    font-size: 10px;
    font-weight: bold;
}

.doc-close { margin-left: 2px; }
.d-min { width: 7px; height: 2px; margin-top: 8px; background: #111; }
.d-res { width: 6px; height: 6px; border: 1px solid #111; border-top-width: 2px; box-shadow: 2px -2px 0 -1px #f0f0f0, 2px -2px 0 0 #111; }

.canvas {
    flex: 1;
    position: relative;
    margin: 2px 2px 2px 0;
    background: #fff;
    border-left: 2px solid #8a8a8a;
    overflow: hidden;
}

.wires {
    position: absolute;
    left: 0;
    top: 0;
    width: 1867px;
    height: 866px;
    pointer-events: none;
}

.wires path { fill: none; shape-rendering: crispEdges; stroke-width: 1; }
.w-seq { stroke: #9a9a9a; }
.w-data { stroke: #2f62e0; }
.w-black { stroke: #000; }
.wires .w-pins { fill: #000; stroke: none; }
.wires .w-xeq { fill: #00c12a; stroke: none; }

/* Diagram objects */
.node {
    position: absolute;
    box-sizing: border-box;
    display: flex;
    flex-direction: column;
    border: solid #80939f;
    border-width: 2px 2px 3px 2px;
    background: #c1d2db;
    box-shadow: inset -1px -1px 0 #fff;
}

.ttl {
    flex: none;
    height: 17px;
    display: flex;
    text-align: center;
    line-height: 17px;
    white-space: nowrap;
    overflow: hidden;
    border-bottom: 1px solid #e9f0f3;
}

.ttl span {
    flex: 1;
    min-width: 0;
    overflow: hidden;
    border-left: 1px solid;
    border-right: 1px solid;
}

.gray .ttl span { padding-right: 5px; }
.gray .ttl .ttl-left { text-align: left; padding: 0 0 0 1px; }

.tb-min, .tb-max {
    flex: none;
    width: 18px;
    position: relative;
}

.tb-min::after {
    content: "";
    position: absolute;
    left: 4px;
    top: 7px;
    width: 10px;
    height: 3px;
    background: #eef3f5;
    border-bottom: 1px solid #666;
    box-sizing: border-box;
}

.tb-max::after {
    content: "";
    position: absolute;
    left: 5px;
    top: 5px;
    width: 7px;
    height: 7px;
    background: #eef3f5;
    border: solid #666;
    border-width: 0 0 1px 1px;
    box-sizing: border-box;
}

.gray .ttl { background: #b9b9b9; }
.gray .ttl span { border-color: #e4e4e4; }
.yellow .ttl { background: #c4c400; }
.yellow .ttl span { border-color: #e2e26a; }
.blue .ttl { background: #7ab8d4; }
.blue .ttl span { border-color: #d4e8f0; }
.teal .ttl { background: #00b7a5; }
.teal .ttl span { border-color: #70d8cc; }

.bd {
    flex: 1;
    min-height: 0;
    display: flex;
}

.col {
    flex: none;
    display: flex;
    flex-direction: column;
    justify-content: center;
    padding-bottom: 1px;
    box-sizing: border-box;
}

.w-28 { width: 29px; }
.w-29 { width: 30px; }
.w-30 { width: 31px; }
.w-38 { width: 39px; }
.w-39 { width: 39px; }
.w-40 { width: 40px; }
.w-49 { width: 50px; }
.w-50 { width: 51px; }

.col-ends { justify-content: space-between; padding-bottom: 1px; }
.col-ab { gap: 21px; }

.pin {
    flex: none;
    height: 19px;
    line-height: 17px;
    margin: 0 1px;
    box-sizing: border-box;
    text-align: center;
    border: 1px solid;
    border-color: #e6eef2 #8d9da8 #8d9da8 #e6eef2;
}

.col-ends .pin-data { height: 17px; line-height: 11px; }
.pin-s { height: 17px; line-height: 14px; }

.xeq {
    height: 15px;
    margin: 0 1px;
    line-height: 16px;
    text-align: center;
    background: #00c12a;
    color: #031;
}

.panel {
    flex: 1;
    min-width: 0;
    display: flex;
    box-sizing: border-box;
    padding: 5px;
    border: 1px solid;
    border-color: #fff #7f929f #7f929f #fff;
}

.inset {
    flex: 1;
    min-width: 0;
    display: flex;
    flex-direction: column;
    box-sizing: border-box;
    background: #fff;
    border: 2px solid;
    border-color: #767676 #e4e4e4 #e4e4e4 #767676;
}

.lines {
    flex: 1;
    overflow: hidden;
    white-space: nowrap;
    padding: 0 0 0 1px;
    line-height: 16px;
}

.code {
    display: block;
    margin: 0 -1px 0 -1px;
    padding: 0;
    line-height: 17px;
    white-space: pre;
    overflow: hidden;
}

.code em { font-style: normal; color: #8b0000; }

.hs {
    flex: none;
    height: 17px;
    display: flex;
    align-items: center;
    background: #f0f0f0;
    padding: 0 5px;
}

.thumb {
    height: 14px;
    margin-left: 9px;
    box-sizing: border-box;
    border: 1px solid #9a9a9a;
    border-radius: 2px;
    background: linear-gradient(#f2f2f2, #c9c9c9);
    position: relative;
}

.thumb::after {
    content: "";
    position: absolute;
    left: calc(50% - 4px);
    top: 3px;
    width: 7px;
    height: 6px;
    background: repeating-linear-gradient(90deg, #555 0 1px, transparent 1px 3px);
}

.th-togen { width: 90px; }
.th-gen { width: 151px; }
.th-multi { width: 80px; }

.arr { width: 0; height: 0; border: 4px solid transparent; flex: none; }
.arr-l { border-left: 0; border-right-color: #333; }
.arr-r { border-right: 0; border-left-color: #333; margin-left: auto; }
.arr-u { border-top: 0; border-bottom-color: #111; }
.arr-d { border-bottom: 0; border-top-color: #111; }

.sb-btn .arr-r { margin-left: 0; }

.field {
    width: 47px;
    height: 18px;
    box-sizing: border-box;
    padding-left: 1px;
    line-height: 15px;
    background: #fff;
    border: 2px solid;
    border-color: #767676 #e4e4e4 #e4e4e4 #767676;
    border-left-width: 1px;
    border-top-width: 1px;
}

.range-bd {
    flex-direction: column;
    padding: 6px 0 0 5px;
    gap: 6px;
}

.range-row {
    display: flex;
    align-items: center;
}

.range-row span:first-child { width: 38px; }

.delay-bd {
    padding: 7px 0 0 6px;
}

.field-c { width: 57px; text-align: center; }

.shape {
    flex-direction: column;
    align-items: center;
    padding: 5px 0 0;
}

.btn {
    width: 83px;
    height: 22px;
    line-height: 19px;
    box-sizing: border-box;
    margin-top: 6px;
    text-align: center;
    white-space: nowrap;
    background: #c1d2db;
    border: 1px solid;
    border-color: #f0f5f7 #666 #666 #f0f5f7;
}

/* Chart */
.chart-bd { padding: 1px 0 0 2px; }

.legend {
    flex: none;
    width: 50px;
    display: flex;
    flex-direction: column;
    align-items: center;
    padding-top: 24px;
    box-sizing: border-box;
}

.leg-axis, .leg-name { height: 16px; line-height: 16px; }
.leg-teor { margin-top: 96px; }
.leg-real { margin-top: 85px; }
.leg-line { width: 37px; height: 10px; margin-top: 3px; flex: none; }
.leg-real + .leg-line { margin-top: 1px; }

.ylabels {
    flex: none;
    width: 30px;
    height: 299px;
    margin-top: 2px;
    display: flex;
    flex-direction: column;
    justify-content: space-between;
    align-items: flex-end;
    font-size: 10.500px;
    line-height: 12px;
}

.vscroll {
    flex: none;
    width: 15px;
    height: 287px;
    margin: 8px 2px 0 7px;
    display: flex;
    flex-direction: column;
    box-sizing: border-box;
    border-right: 2px solid #80939f;
}

.hscroll {
    display: flex;
    height: 13px;
    margin-top: 1px;
    border-bottom: 2px solid #80939f;
}

.sb-btn {
    flex: none;
    width: 14px;
    height: 14px;
    display: flex;
    align-items: center;
    justify-content: center;
    box-sizing: border-box;
    background: #d4e0e6;
    border: 1px solid;
    border-color: #fff #80939f #80939f #fff;
}

.vscroll .sb-btn { width: 13px; }

.sb-track {
    flex: 1;
    border: 1px solid;
    border-color: #fff #80939f #80939f #fff;
}

.plot-col {
    flex: none;
    width: 424px;
    padding-top: 8px;
    display: flex;
    flex-direction: column;
}

.plot { display: block; width: 424px; height: 287px; flex: none; }
.grid { stroke: #808080; fill: none; shape-rendering: crispEdges; }
.ticks-x { stroke: #666; stroke-width: 5; stroke-dasharray: 1 9.500; fill: none; shape-rendering: crispEdges; }
.ticks-y { stroke: #666; stroke-width: 5; stroke-dasharray: 1 5.400; fill: none; shape-rendering: crispEdges; }
.trace-teor, .mark-teor { stroke: #6b6b00; fill: none; }
.trace-real, .mark-real { stroke: #8a00ff; fill: none; }

.xlabels {
    display: flex;
    justify-content: space-between;
    margin: 2px -6px 0;
    font-size: 10.500px;
    line-height: 12px;
}

.xlabels b { width: 14px; text-align: center; }
.xname { margin-top: 15px; text-align: center; }

/* Alphanumeric */
.alpha-bd {
    flex-direction: column;
    padding: 13px 0 0 10px;
    gap: 28px;
    line-height: 14px;
}

/* Object places on the canvas */
.n-togen { left: 30px; top: 27px; width: 287px; height: 137px; }
.n-range { left: 123px; top: 196px; width: 103px; height: 100px; }
.n-abs   { left: 430px; top: 140px; width: 227px; height: 71px; }
.n-gen   { left: 407px; top: 248px; width: 294px; height: 95px; }
.n-delay { left: 517px; top: 370px; width: 74px; height: 52px; }
.n-multi { left: 467px; top: 468px; width: 294px; height: 95px; }
.n-volt  { left: 145px; top: 378px; width: 178px; height: 76px; }
.n-freq  { left: 145px; top: 478px; width: 178px; height: 76px; }
.n-coll  { left: 145px; top: 568px; width: 178px; height: 76px; }
.n-chart { left: 870px; top: 32px; width: 546px; height: 388px; }
.n-fnam  { left: 840px; top: 471px; width: 248px; height: 71px; }
.n-alpha { left: 1134px; top: 462px; width: 539px; height: 108px; }
.n-roz   { left: 455px; top: 617px; width: 337px; height: 77px; }
.n-max   { left: 1174px; top: 617px; width: 378px; height: 77px; }
.n-big   { left: 264px; top: 714px; width: 798px; height: 103px; }
.n-conc  { left: 1144px; top: 750px; width: 120px; height: 71px; }

/* Bottom tabs and status */
.tabs {
    flex: none;
    height: 25px;
    box-sizing: border-box;
    padding: 4px 0 0 25px;
    display: flex;
    background: #f5f5f5;
    border-bottom: 2px solid #a0a0a0;
}

.tab {
    display: flex;
    align-items: center;
    height: 19px;
    padding: 0 4px 0 4px;
    gap: 4px;
    font-size: 11px;
    color: #555;
    border: 1px solid #aaa;
    border-bottom: 0;
    border-left-width: 0;
    border-radius: 3px 3px 0 0;
}

.tab:first-child { border-left-width: 1px; }
.tab-ic { width: 15px; height: 15px; }

.statusbar {
    flex: none;
    height: 24px;
    box-sizing: border-box;
    padding-top: 1px;
    display: flex;
    align-items: center;
    background: #f0eeee;
    position: relative;
}

.status-ready { margin-left: 4px; margin-right: auto; }

.pane {
    height: 19px;
    line-height: 17px;
    box-sizing: border-box;
    margin-left: 2px;
    padding-left: 4px;
    border: 1px solid #a8a8a8;
    border-radius: 1px;
    white-space: nowrap;
}

.pane-mode { width: 114px; }
.pane-prof { width: 39px; padding-left: 3px; font-size: 11.500px; }
.pane-mod { width: 38px; padding-left: 3px; }
.pane-web { width: 35px; margin-right: 18px; padding-left: 3px; font-size: 11.500px; }
.pane-off { color: #aaa; }

.sizegrip {
    position: absolute;
    right: 1px;
    bottom: 2px;
    width: 11px;
    height: 11px;
    background: repeating-linear-gradient(90deg, #aaa 0 2px, transparent 2px 4px);
    clip-path: polygon(100% 0, 100% 100%, 0 100%);
}

/* Windows taskbar */
.taskbar {
    flex: none;
    height: 40px;
    position: relative;
    display: flex;
    align-items: center;
    background:
        linear-gradient(118deg, transparent 66%, rgba(255,255,255,.45) 70%, transparent 73%),
        linear-gradient(90deg, #2a83ba 0, #4aa4d4 420px, #3a93c6 800px, #2f80b5 1150px, #1f6199 1450px, #164c82 1900px);
    color: #fff;
}

.orb { width: 40px; height: 40px; margin-left: 7px; flex: none; }

.tk-ie { position: absolute; left: 70px; top: 2px; width: 36px; height: 36px; }

.tk-btn {
    position: absolute;
    top: 1px;
    width: 58px;
    height: 38px;
    box-sizing: border-box;
    display: flex;
    align-items: center;
    justify-content: center;
    border: 1px solid #8ec4e2;
    border-radius: 3px;
    background: rgba(255,255,255,.2);
}

.tk-btn-first { left: 122px; }
.tk-btn-active { left: 184px; background: rgba(255,255,255,.45); border-color: #d8eef8; }
.tk-ic { width: 36px; height: 36px; flex: none; }
.tk-pdf { position: absolute; left: 261px; top: 5px; width: 30px; height: 28px; }

.tray {
    position: absolute;
    right: 0;
    top: 0;
    height: 40px;
    display: flex;
    align-items: center;
}

.tray-cs { margin-right: 13px; font-size: 12px; }

.tray-up {
    width: 0;
    height: 0;
    margin-right: 14px;
    border: 4px solid transparent;
    border-top: 0;
    border-bottom: 5px solid #fff;
}

.tray-ic { width: 16px; height: 16px; margin-right: 8px; }

.clock {
    width: 60px;
    margin: 0 4px 0 1px;
    display: flex;
    flex-direction: column;
    align-items: center;
    gap: 4px;
    line-height: 13px;
    font-size: 12px;
}

.show-desktop {
    width: 13px;
    height: 40px;
    border: 1px solid #5f8ab0;
    box-sizing: border-box;
    background: rgba(255,255,255,.12);
}
```
